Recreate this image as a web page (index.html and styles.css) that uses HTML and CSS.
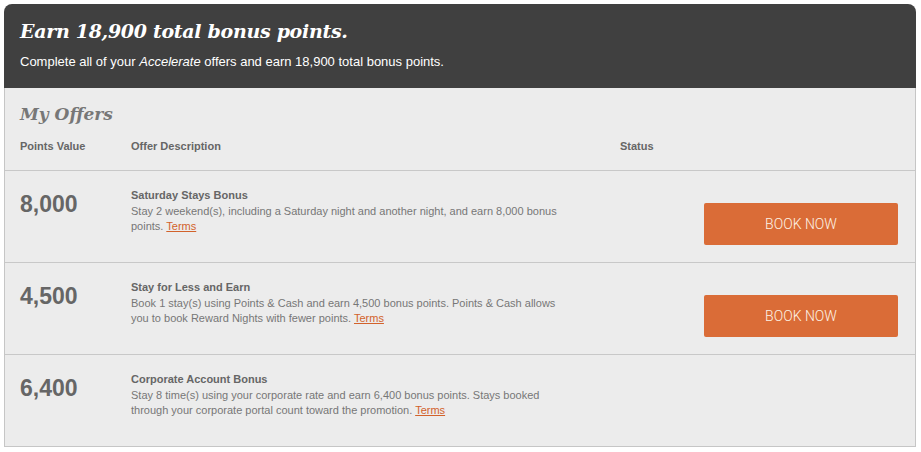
FILE: index.html
```html
<!DOCTYPE html>
<html lang="en">
<head>
  <meta charset="UTF-8" />
  <title>Accelerate Offers</title>
  <link rel="stylesheet" href="styles.css">
</head>
<body>
  <div class="offers">
    <div class="offers-head">
      <h1>Earn 18,900 total bonus points.</h1>
      <p>Complete all of your <em>Accelerate</em> offers and earn 18,900 total bonus points.</p>
    </div>

    <div class="offers-body">
      <h2>My Offers</h2>
      <div class="cols">
        <span>Points Value</span>
        <span>Offer Description</span>
        <span>Status</span>
      </div>

      <div class="offer">
        <div class="points">8,000</div>
        <div class="desc">
          <strong>Saturday Stays Bonus</strong>
          Stay 2 weekend(s), including a Saturday night and another night, and earn 8,000 bonus points. <a href="#">Terms</a>
        </div>
        <div class="action"><a class="book" href="#">BOOK NOW</a></div>
      </div>

      <div class="offer">
        <div class="points">4,500</div>
        <div class="desc">
          <strong>Stay for Less and Earn</strong>
          Book 1 stay(s) using Points &amp; Cash and earn 4,500 bonus points. Points &amp; Cash allows you to book Reward Nights with fewer points. <a href="#">Terms</a>
        </div>
        <div class="action"><a class="book" href="#">BOOK NOW</a></div>
      </div>

      <div class="offer">
        <div class="points">6,400</div>
        <div class="desc">
          <strong>Corporate Account Bonus</strong>
          Stay 8 time(s) using your corporate rate and earn 6,400 bonus points. Stays booked through your corporate portal count toward the promotion. <a href="#">Terms</a>
        </div>
        <div class="action"></div>
      </div>
    </div>
  </div>
</body>
</html>
```

FILE: styles.css
```css
body {
  margin: 4px;
  background: #fff;
  font-family: "Liberation Sans", Arial, sans-serif;
  font-size: 11px;
  color: #666;
}
.offers {
  width: 912px;
}
.offers-head {
  background: #404040;
  color: #fff;
  border-radius: 8px 8px 0 0;
  padding: 14px 15px 15px 16px;
  height: 84px;
  box-sizing: border-box;
}
.offers-head h1 {
  margin: 0;
  font-family: "DejaVu Serif", Georgia, serif;
  font-style: italic;
  font-weight: 700;
  font-size: 19px;
  line-height: 26px;
  letter-spacing: -0.3px;
}
.offers-head p {
  margin: 10px 0 0;
  font-size: 13px;
  line-height: 15px;
}
.offers-body {
  background: #ececec;
  border: 1px solid #c6c6c6;
  border-top: none;
}
.offers-body h2 {
  margin: 0;
  padding: 15px 15px 0;
  font-family: "DejaVu Serif", Georgia, serif;
  font-style: italic;
  font-weight: 700;
  font-size: 17px;
  line-height: 22px;
  color: #777;
}
.cols {
  display: grid;
  grid-template-columns: 111px 489px 1fr;
  padding: 14px 15px 0;
  height: 46px;
  box-sizing: border-box;
  border-bottom: 1px solid #c8c8c8;
  font-weight: 700;
  line-height: 14px;
}
.offer {
  display: grid;
  grid-template-columns: 111px 430px 1fr;
  padding: 17px 17px 0 15px;
  height: 92px;
  box-sizing: border-box;
  border-bottom: 1px solid #c8c8c8;
}
.offer:last-child {
  border-bottom: none;
  height: 91px;
}
.points {
  padding-top: 2px;
  font-size: 23px;
  font-weight: 700;
  line-height: 28px;
  color: #666;
}
.desc {
  line-height: 15px;
  color: #777;
}
.desc strong {
  display: block;
  margin-bottom: 1px;
  color: #666;
}
.desc a {
  color: #d2622b;
}
.action {
  display: flex;
  justify-content: flex-end;
  padding-top: 15px;
}
.book {
  display: flex;
  align-items: center;
  justify-content: center;
  width: 194px;
  height: 42px;
  background: #da6c37;
  border-radius: 2px;
  color: #fdf3e6;
  font-family: Roboto, "Liberation Sans", sans-serif;
  font-weight: 300;
  font-size: 14px;
  text-decoration: none;
}
```
